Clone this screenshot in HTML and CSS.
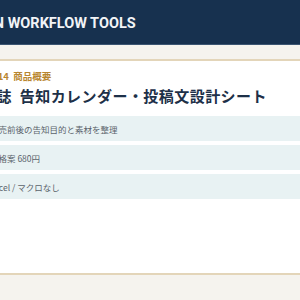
FILE: index.html
```html
<!DOCTYPE html>
<html lang="ja">
<head>
<meta charset="utf-8">
<title>告知カレンダー・投稿文設計シート</title>
<link rel="stylesheet" href="styles.css">
</head>
<body>
<header class="site-header">
  <div class="brand">PUBLICATION WORKFLOW TOOLS</div>
</header>
<main class="page">
  <section class="card">
    <p class="eyebrow">No.014&nbsp; 商品概要</p>
    <h1 class="title">雑誌 告知カレンダー・投稿文設計シート</h1>
    <ul class="facts">
      <li class="fact">発売前後の告知目的と素材を整理</li>
      <li class="fact">価格案 680円</li>
      <li class="fact">Excel / マクロなし</li>
    </ul>
  </section>
</main>
</body>
</html>
```
FILE: styles.css
```css
html, body {
  margin: 0;
  padding: 0;
}
body {
  background: #f5f3ee;
  overflow: hidden;
  font-family: "Noto Sans CJK JP", "Roboto", sans-serif;
}
.site-header {
  background: #17314f;
  border-bottom: 1px solid #3b5572;
  display: flex;
  align-items: center;
  padding-top: 2px;
  height: 42px;
}
.brand {
  margin-left: -88px;
  font-family: "Roboto", "Liberation Sans", sans-serif;
  font-weight: 700;
  font-size: 14.5px;
  color: #f2f4f7;
  white-space: nowrap;
}
.page {
  padding-top: 14px;
}
.card {
  background: #ffffff;
  border-top: 2px solid #e3d5b9;
  border-bottom: 2px solid #e3d5b9;
  padding: 8px 0 74px;
}
.eyebrow {
  margin: 0 0 3px -24px;
  font-size: 9.5px;
  line-height: 14px;
  font-weight: 700;
  color: #b8862f;
  white-space: nowrap;
}
.title {
  margin: 0 0 10px -19px;
  font-size: 15px;
  line-height: 20px;
  font-weight: 700;
  letter-spacing: 0.03em;
  word-spacing: 4px;
  color: #1d3048;
  white-space: nowrap;
}
.facts {
  list-style: none;
  margin: 0 -20px 0 -30px;
  padding: 0;
  display: flex;
  flex-direction: column;
  gap: 4px;
}
.fact {
  height: 25px;
  display: flex;
  align-items: center;
  padding-left: 20px;
  background: #e8f2f3;
  font-size: 8.5px;
  color: #5a636b;
  white-space: nowrap;
}
```
